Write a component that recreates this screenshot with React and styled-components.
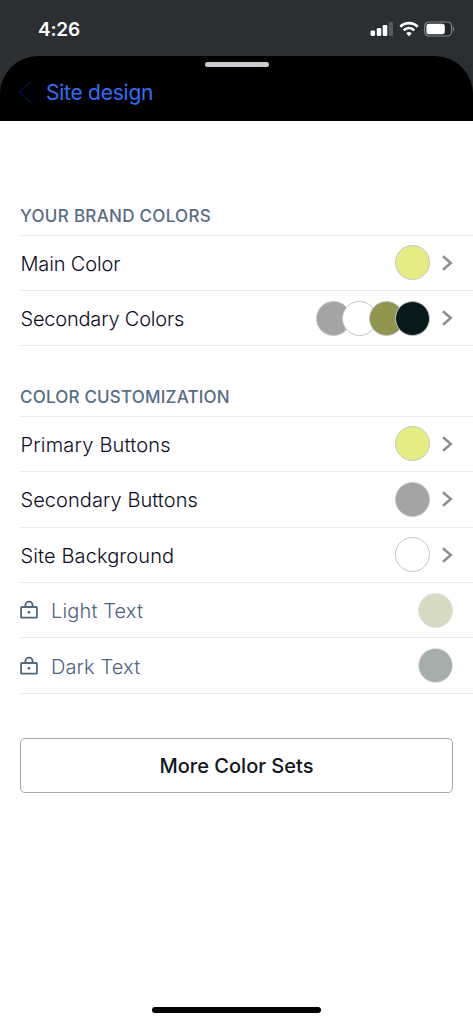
import styled, { createGlobalStyle } from "styled-components";

const GlobalStyle = createGlobalStyle`
  * {
    box-sizing: border-box;
  }
  body {
    margin: 0;
    background: #fff;
    font-family: Inter, "Liberation Sans", sans-serif;
  }
`;

const Screen = styled.div`
  width: 473px;
  height: 1024px;
  display: flex;
  flex-direction: column;
  overflow: hidden;
  background: #fff;
`;
const Top = styled.header`
  height: 121px;
  flex-shrink: 0;
  background: #2b2f32;
`;
const StatusBar = styled.div`
  height: 56px;
  padding: 2px 18px 0 38px;
  display: flex;
  align-items: center;
  justify-content: space-between;
`;
const Time = styled.span`
  padding-top: 2px;
  font-size: 19px;
  line-height: 24px;
  font-weight: 600;
  letter-spacing: ${(props) => props.$spacing};
  color: #fff;
`;
const StatusIcons = styled.div`
  display: flex;
  align-items: center;
  gap: 5px;
`;
const Sheet = styled.div`
  height: 65px;
  padding-top: 6px;
  display: flex;
  flex-direction: column;
  background: #000;
  border-radius: 38px 38px 0 0;
`;
const Grabber = styled.div`
  width: 64px;
  height: 5px;
  align-self: center;
  border-radius: 3px;
  background: #cbccd1;
`;
const BackLink = styled.a`
  margin-top: 12px;
  padding-left: 18px;
  display: flex;
  align-items: center;
  gap: 14px;
  font-size: 21px;
  line-height: 28px;
  letter-spacing: ${(props) => props.$spacing};
  color: #2f6ff6;
`;
const Content = styled.main`
  flex: 1;
  padding: 83px 0 0 20px;
`;
const Section = styled.section`
  margin-bottom: ${(props) => props.$gap};
`;
const Heading = styled.h2`
  height: 31.6px;
  margin: 0;
  padding-top: 1.2px;
  border-bottom: 1px solid #ebebeb;
  font-size: 17px;
  line-height: 23px;
  font-weight: 550;
  letter-spacing: ${(props) => props.$spacing};
  color: #576c85;
`;
const Row = styled.div`
  height: 55.4px;
  padding-right: 20px;
  display: flex;
  align-items: center;
  border-bottom: 1px solid #ebebeb;
`;
const Label = styled.span`
  flex: 1;
  padding-top: 2px;
  padding-left: ${(props) => (props.$locked ? 0 : "0.5px")};
  font-size: 20px;
  line-height: 26px;
  font-weight: ${(props) => (props.$locked ? 300 : 360)};
  letter-spacing: ${(props) => props.$spacing};
  color: ${(props) => (props.$locked ? "#4d6380" : "#0c0c1c")};
`;
const Swatches = styled.div`
  display: flex;
`;
const Swatch = styled.span`
  width: 35px;
  height: 35px;
  border-radius: 50%;
  border: 1px solid ${(props) => (props.$locked ? "#e0e2e3" : "#c3c7c9")};
  background: ${(props) => props.$color};

  & + & {
    margin-left: -8.6px;
  }
`;
const Icon = styled.svg`
  display: block;
  flex-shrink: 0;
  margin-left: ${(props) => props.$left || 0};
  margin-right: ${(props) => props.$right || 0};
`;
const Button = styled.button`
  width: 433px;
  height: 55px;
  padding: 2px 0 0;
  border: 1px solid #a5a8ab;
  border-radius: 5px;
  background: #fff;
  color: #10161a;
  font-family: inherit;
  font-size: 20px;
  font-weight: 500;
  letter-spacing: ${(props) => props.$spacing};
`;
const HomeBar = styled.div`
  width: 169px;
  height: 6px;
  margin: 0 auto 11px;
  flex-shrink: 0;
  border-radius: 3px;
  background: #000;
`;

const Signal = () => (
  <Icon width="24" height="16" viewBox="0 0 24 16" fill="#fff">
    <rect x="0.5" y="9.5" width="4.6" height="5.5" rx="1.4" />
    <rect x="6.8" y="7" width="4.4" height="8" rx="1.3" />
    <rect x="12.7" y="4" width="4.6" height="11" rx="1.3" />
    <rect x="18.8" y="1" width="4.2" height="14" rx="1.3" fill="#595c5e" />
  </Icon>
);

const Wifi = () => (
  <Icon width="20" height="16" viewBox="0 0 20 16" fill="none" stroke="#fff">
    <path d="M1.3 5.7a12.4 12.4 0 0 1 17.4 0" strokeWidth="2.8" />
    <path d="M4.7 9.3a7.5 7.5 0 0 1 10.6 0" strokeWidth="2.5" />
    <path d="M10 15.2l-2.8-2.9a4 4 0 0 1 5.6 0z" fill="#fff" stroke="none" />
  </Icon>
);

const Battery = () => (
  <Icon width="31" height="16" viewBox="0 0 31 16">
    <rect x="0.7" y="1" width="26.8" height="14" rx="4.2" fill="#202426" stroke="#85888a" strokeWidth="1.2" />
    <rect x="2.4" y="2.8" width="18.4" height="10.4" rx="2.5" fill="#fff" />
    <path d="M28.8 5.6c1.8.6 1.8 4.2 0 4.8z" fill="#85888a" />
  </Icon>
);

const Back = () => (
  <Icon width="14" height="24" viewBox="0 0 14 24" fill="none" stroke="#020e33" strokeWidth="1.8">
    <path d="M13 0.5L1.5 11 13 22" />
  </Icon>
);

const Chevron = () => (
  <Icon $left="12px" width="11" height="16" viewBox="0 0 11 16" fill="none" stroke="#8e8e8e" strokeWidth="2.5">
    <path d="M1 1.2L8.8 8 1 14.8" />
  </Icon>
);

const Lock = () => (
  <Icon $right="13px" width="18" height="20" viewBox="0 0 18 20" fill="none" stroke="#526780" strokeWidth="1.8">
    <rect x="1.1" y="7" width="15.8" height="10.6" rx="0.6" />
    <path d="M5.4 7V5.2a3.6 3.6 0 0 1 7.2 0V7" />
    <circle cx="9" cy="12.3" r="1.4" fill="#526780" stroke="none" />
  </Icon>
);

const brandColors = [
  { label: "Main Color", spacing: "-0.15px", colors: ["#e6ec82"] },
  {
    label: "Secondary Colors",
    spacing: "-0.2px",
    colors: ["#a2a5a4", "#ffffff", "#929550", "#07191b"],
  },
];

const customColors = [
  { label: "Primary Buttons", spacing: "0.2px", colors: ["#e6ec82"] },
  { label: "Secondary Buttons", spacing: "0.06px", colors: ["#a2a5a4"] },
  { label: "Site Background", spacing: "0.12px", colors: ["#ffffff"] },
  { label: "Light Text", spacing: "0.15px", colors: ["#d7dac0"], locked: true },
  { label: "Dark Text", spacing: "0.12px", colors: ["#a6adad"], locked: true },
];

const ColorRow = ({ label, spacing, colors, locked }) => (
  <Row>
    {locked && <Lock />}
    <Label $locked={locked} $spacing={spacing}>
      {label}
    </Label>
    <Swatches>
      {colors.map((color) => (
        <Swatch key={color} $color={color} $locked={locked} />
      ))}
    </Swatches>
    {!locked && <Chevron />}
  </Row>
);

const App = () => {
  return (
    <Screen>
      <GlobalStyle />
      <Top>
        <StatusBar>
          <Time $spacing="-0.2px">4:26</Time>
          <StatusIcons>
            <Signal />
            <Wifi />
            <Battery />
          </StatusIcons>
        </StatusBar>
        <Sheet>
          <Grabber />
          <BackLink $spacing="-0.25px">
            <Back />
            <span>Site design</span>
          </BackLink>
        </Sheet>
      </Top>
      <Content>
        <Section $gap="38.8px">
          <Heading $spacing="0.3px">YOUR BRAND COLORS</Heading>
          {brandColors.map((row) => (
            <ColorRow key={row.label} {...row} />
          ))}
        </Section>
        <Section $gap="43.8px">
          <Heading $spacing="0.2px">COLOR CUSTOMIZATION</Heading>
          {customColors.map((row) => (
            <ColorRow key={row.label} {...row} />
          ))}
        </Section>
        <Button $spacing="0.02px">More Color Sets</Button>
      </Content>
      <HomeBar />
    </Screen>
  );
};

export default App;
